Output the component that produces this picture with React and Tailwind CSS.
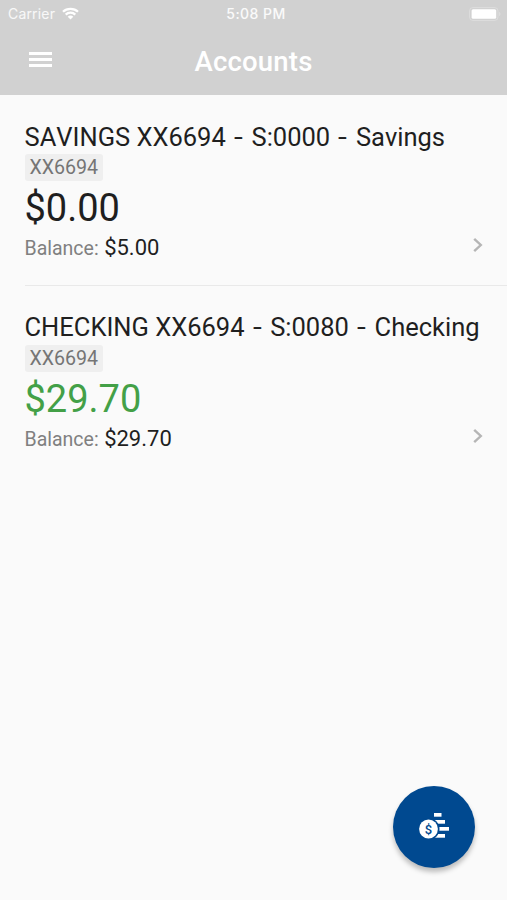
const accounts = [
  {
    id: 1,
    name: ["SAVINGS XX6694", "S:0000", "Savings"],
    number: "XX6694",
    available: "$0.00",
    balance: "$5.00",
  },
  {
    id: 2,
    name: ["CHECKING XX6694", "S:0080", "Checking"],
    number: "XX6694",
    available: "$29.70",
    balance: "$29.70",
    positive: true,
  },
];

function StatusBar() {
  return (
    <div className="grid h-[27px] grid-cols-3 items-center pl-[8px] pr-[6px] font-['Inter',sans-serif] text-[14px] leading-none">
      <div className="flex items-center gap-[7px] tracking-[0.25px] text-white/85">
        <span>Carrier</span>
        <svg width="17" height="13" viewBox="0 0 17 13" fill="none" stroke="white">
          <path d="M1 4.7C5 .8 12 .8 16 4.7" strokeWidth="2.3" />
          <path d="M3.7 7.6C6.3 5 10.7 5 13.3 7.6" strokeWidth="2.2" />
          <path d="M8.5 12.6L5.7 9.8C7.2 8.2 9.8 8.2 11.3 9.8Z" fill="white" stroke="none" />
        </svg>
      </div>
      <span className="pl-[3px] text-center font-medium tracking-[0.45px] whitespace-nowrap text-white/90">
        5:08 PM
      </span>
      <svg className="justify-self-end" width="32" height="14" viewBox="0 0 32 14">
        <rect x=".5" y=".5" width="28.5" height="13" rx="3.5" fill="none" stroke="white" strokeOpacity=".25" />
        <rect x="2.6" y="2.3" width="24.6" height="9.4" rx="1.5" fill="white" />
        <path d="M30.2 4.8c1.7.7 1.7 3.7 0 4.4z" fill="white" fillOpacity=".3" />
      </svg>
    </div>
  );
}

function Header() {
  return (
    <header className="h-[95px] bg-[#d1d1d1] text-white">
      <StatusBar />
      <div className="grid h-[68px] grid-cols-[80px_1fr_80px] items-center">
        <button className="ml-[29px] flex w-[23px] flex-col gap-[3px] pb-[3px]" aria-label="Menu">
          <span className="h-[3px] w-full bg-white" />
          <span className="h-[3px] w-full bg-white" />
          <span className="h-[3px] w-full bg-white" />
        </button>
        <h1 className="pt-[2px] text-center text-[27.5px] leading-8 font-medium tracking-[0.2px]">
          Accounts
        </h1>
      </div>
    </header>
  );
}

function Dash() {
  return (
    <>
      {" "}
      <span className="mx-[3px] inline-block scale-x-[1.25]">-</span>{" "}
    </>
  );
}

function AccountRow({ account }) {
  const [title, suffix, type] = account.name;

  return (
    <li className="flex h-[190.5px] items-start justify-between pt-[25.75px]">
      <div>
        <h2 className="text-[25.5px] leading-8 whitespace-nowrap">
          {title}
          <Dash />
          {suffix}
          <Dash />
          {type}
        </h2>
        <div className="mt-[1.25px] flex">
          <span className="rounded-[3px] bg-[#efefef] px-[5px] pt-px text-[19.6px] leading-[26px] text-[#757575]">
            {account.number}
          </span>
        </div>
        <p
          className={`pt-px text-[38px] leading-[52px] ${account.positive ? "text-[#43a047]" : ""}`}
        >
          {account.available}
        </p>
        <p className="-mt-px text-[22px] leading-[30px]">
          <span className="text-[19.5px] text-[#808080]">Balance:</span>{" "}
          {account.balance}
        </p>
      </div>
      <svg
        className="mt-[116.25px] mr-[24px] -ml-[34px] shrink-0"
        width="10"
        height="16"
        viewBox="0 0 10 16"
        fill="none"
        stroke="#b5b5b5"
        strokeWidth="2.4"
      >
        <path d="M1.2 1.8L7.8 8L1.2 14.2" />
      </svg>
    </li>
  );
}

// Coin in front of a stack of bars
function CoinIcon() {
  return (
    <svg className="mb-[2px]" width="32" height="28" viewBox="0 0 32 28" fill="white">
      <rect x="16" y="1" width="7.5" height="3.7" />
      <rect x="17" y="8" width="10" height="3.7" />
      <rect x="20" y="15" width="11" height="3.7" />
      <rect x="17" y="22" width="10" height="3.7" />
      <circle cx="10.5" cy="17" r="11" fill="#004990" />
      <circle cx="10.5" cy="17" r="9.4" />
      <text x="10.5" y="21.6" textAnchor="middle" fontSize="13" fontWeight="500" fill="#004990">
        $
      </text>
    </svg>
  );
}

function App() {
  return (
    <div className="relative h-[900px] w-full overflow-hidden bg-[#fafafa] font-['Roboto',sans-serif] text-[#1f1f1f] [font-kerning:none]">
      <Header />
      <ul className="ml-[24.5px] divide-y divide-[#e9e9e9]">
        {accounts.map((account) => (
          <AccountRow key={account.id} account={account} />
        ))}
      </ul>
      <button
        className="absolute right-[32px] bottom-[32px] flex size-[82px] items-center justify-center rounded-full bg-[#004990] shadow-[0_4px_5px_rgba(0,0,0,0.25)]"
        aria-label="Transfer money"
      >
        <CoinIcon />
      </button>
    </div>
  );
}

export default App;
